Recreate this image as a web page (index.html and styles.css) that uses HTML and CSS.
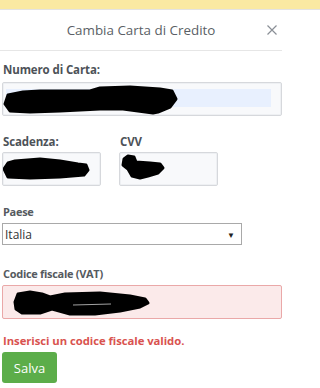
FILE: index.html
```html
<!DOCTYPE html>
<html lang="it">
<head>
<meta charset="utf-8">
<title>Cambia Carta di Credito</title>
<link rel="stylesheet" href="styles.css">
</head>
<body>
<div class="topbar"></div>
<div class="modal">
  <div class="header">
    <div class="title">Cambia Carta di Credito</div>
    <div class="close" aria-label="Chiudi">
      <svg width="10" height="10" viewBox="0 0 10 10"><path d="M0.5 0.5 L9.5 9.5 M9.5 0.5 L0.5 9.5" stroke="#8a8f96" stroke-width="1.2" fill="none"/></svg>
    </div>
  </div>
  <div class="body">
    <label class="lbl lbl-numero">Numero di Carta:</label>
    <div class="field field-wide">
      <div class="autofill"></div>
      <svg class="redact" width="180" height="32" viewBox="0 0 180 32"><path d="M2 21 L5 12 L20 9 L37 8 L87 8 L97 5 L127 4 L157 6 L169 8 L173 16 L167 24 L155 29 L150 30 L120 26 L97 26 L57 28 L27 29 L7 28 Z" fill="#000" stroke="#000" stroke-width="3" stroke-linejoin="round"/></svg>
    </div>

    <div class="row">
      <div class="col">
        <label class="lbl lbl-small">Scadenza:</label>
        <div class="field field-half">
          <svg class="redact" width="97" height="32" viewBox="0 0 97 32"><path d="M1 16 L5 10 L12 8 L37 6 L57 8 L75 11 L83 12 L85 17 L81 22 L57 24 L27 25 L5 24 Z" fill="#000" stroke="#000" stroke-width="3" stroke-linejoin="round"/></svg>
        </div>
      </div>
      <div class="col">
        <label class="lbl lbl-small">CVV</label>
        <div class="field field-half">
          <svg class="redact" width="97" height="32" viewBox="0 0 97 32"><path d="M4 6 L8 3 L14 4 L16 9 L30 10 L40 11 L43 15 L38 20 L28 23 L20 25 L12 23 L8 16 L3 12 Z" fill="#000" stroke="#000" stroke-width="3" stroke-linejoin="round"/></svg>
        </div>
      </div>
    </div>

    <label class="lbl lbl-paese">Paese</label>
    <div class="select">
      <span class="select-value">Italia</span>
      <span class="caret">&#9660;</span>
    </div>

    <label class="lbl lbl-vat">Codice fiscale (VAT)</label>
    <div class="field field-wide field-error">
      <svg class="redact" width="160" height="32" viewBox="0 0 160 32"><path d="M12 16 L15 8 L27 6 L39 8 L47 11 L62 8 L97 7 L127 10 L142 13 L145 17 L137 21 L117 25 L92 28 L67 28 L49 23 L37 27 L19 27 L13 23 Z" fill="#000" stroke="#000" stroke-width="3" stroke-linejoin="round"/><path d="M70 19 L108 18" stroke="#fff" stroke-width="0.8" opacity="0.8"/></svg>
    </div>

    <div class="error">Inserisci un codice fiscale valido.</div>
    <button class="btn-save" type="button">Salva</button>
  </div>
</div>
</body>
</html>
```

FILE: styles.css
```css
* { box-sizing: border-box; }
html, body { margin: 0; padding: 0; background: #fff; }
body { font-family: "Open Sans", "Liberation Sans", sans-serif; color: #555; }

.topbar {
  height: 10px;
  background: #fae9a2;
  border-bottom: 1px solid #e3e3e3;
}

.modal { width: 282px; }

.header {
  display: grid;
  grid-template-columns: 1fr auto 1fr;
  align-items: center;
  height: 41px;
  border-bottom: 1px solid #e6e6e6;
}
.title {
  grid-column: 2;
  font-size: 13.4px;
  color: #5a5f66;
  white-space: nowrap;
}
.close {
  justify-self: end;
  margin-right: 5px;
  display: flex;
  align-items: center;
  height: 10px;
}

.body { padding-left: 2px; }

.lbl {
  display: block;
  font-size: 11.5px;
  letter-spacing: -0.12px;
  line-height: 16px;
  font-weight: 700;
  color: #4d5258;
  padding-left: 1px;
}
.lbl-numero { margin-top: 11px; margin-bottom: 4px; }
.lbl-small { margin-top: 18px; margin-bottom: 2px; }
.lbl-paese { margin-top: 18px; margin-bottom: 3px; font-size: 11px; letter-spacing: -0.3px; color: #555a60; }
.lbl-vat { margin-top: 21px; margin-bottom: 3px; font-size: 11px; letter-spacing: -0.3px; color: #555a60; }

.field {
  position: relative;
  height: 34px;
  border: 1px solid #d6d8dc;
  border-radius: 2px;
  background: #f8f9fb;
  box-shadow: inset 0 0 0 1px #eef0f3;
}
.field-wide { width: 280px; }
.field-half { width: 99px; }
.field-error {
  background: #fbeaea;
  border-color: #eaa8a8;
  box-shadow: none;
}

.autofill {
  position: absolute;
  left: 3px;
  top: 6px;
  width: 265px;
  height: 18px;
  background: #e8f0fe;
}

.redact { position: absolute; left: 0; top: 0; display: block; }

.row {
  display: grid;
  grid-template-columns: 99px 99px;
  column-gap: 18px;
}

.select {
  width: 240px;
  height: 22px;
  border: 1px solid #a9a9a9;
  background: #fff;
  display: flex;
  align-items: center;
  justify-content: space-between;
  padding: 0 6px 0 2px;
}
.select-value { font-size: 12px; color: #333; }
.caret { font-size: 8px; color: #222; }

.error {
  margin-top: 14px;
  margin-bottom: 3px;
  font-size: 11.3px;
  letter-spacing: -0.05px;
  line-height: 16px;
  font-weight: 700;
  color: #d9534f;
  padding-left: 1px;
}

.btn-save {
  display: block;
  width: 55px;
  height: 31px;
  border: none;
  border-radius: 3px;
  background: #5cad4a;
  color: #fff;
  font-family: "Open Sans", "Liberation Sans", sans-serif;
  font-size: 13px;
  padding: 0;
}
```
